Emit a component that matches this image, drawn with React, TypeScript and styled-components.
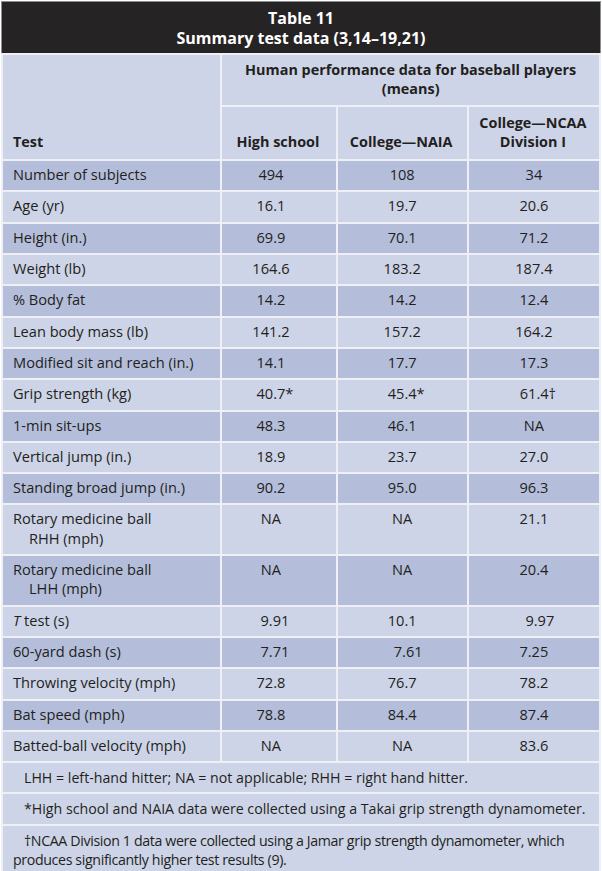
import styled, { createGlobalStyle } from "styled-components";

const GlobalStyle = createGlobalStyle`
  html, body {
    margin: 0;
    padding: 0;
    background: #ffffff;
  }
  body {
    font-family: "Open Sans", "Noto Sans", sans-serif;
    color: #231f20;
  }
`;

const LIGHT = "#cdd4e7";
const DARK = "#b4bedb";

const Page = styled.div`
  width: 600px;
  padding: 1px 0 0 1px;
`;

const TitleBar = styled.div`
  box-sizing: border-box;
  height: 52px;
  background: #262324;
  border: 1px solid #8e8e8e;
  border-bottom: 0;
  color: #ffffff;
  font-weight: 700;
  font-size: 16px;
  line-height: 20px;
  text-align: center;
  padding-top: 6px;
`;

const Table = styled.table`
  border-collapse: separate;
  border-spacing: 2px;
  table-layout: fixed;
  width: 600px;
  background: #eff0f5;
  font-size: 14.6px;
  line-height: 19.3px;
`;

const Col = styled.col<{ $w: number }>`
  width: ${(p) => p.$w}px;
`;

const HeadCell = styled.th<{ $align?: string }>`
  background: ${LIGHT};
  font-weight: 700;
  font-size: 14.4px;
  text-align: ${(p) => p.$align || "center"};
  vertical-align: bottom;
  padding: 6px 8px 8px 6px;
`;

const TestHead = styled(HeadCell)`
  padding-left: 10px;
`;

const SpanHead = styled(HeadCell)`
  vertical-align: middle;
  padding: 5px 6px 6px 6px;
  height: 38px;
`;

const LabelCell = styled.td<{ $dark: boolean }>`
  background: ${(p) => (p.$dark ? DARK : LIGHT)};
  padding: 4px 4px 6px 26px;
  text-indent: -16px;
  vertical-align: top;
`;

const ValueCell = styled.td<{ $dark: boolean; $first: boolean }>`
  background: ${(p) => (p.$dark ? DARK : LIGHT)};
  padding: 4px ${(p) => (p.$first ? 18 : 2)}px 6px 2px;
  text-align: center;
  vertical-align: top;
  white-space: nowrap;
`;

const Value = styled.span<{ $dx: number }>`
  position: relative;
  left: ${(p) => p.$dx}px;
`;

const Note = styled.td<{ $tight?: boolean }>`
  background: ${LIGHT};
  padding: 5px 4px 5px 10px;
  text-indent: 11px;
  font-size: 14.2px;
  line-height: 19.3px;
  letter-spacing: ${(p) => (p.$tight ? "-0.36px" : "0")};
`;

type Row = {
  label: React.ReactNode;
  values: [string, string, string];
  shifts?: [number, number, number];
};

const rows: Row[] = [
  { label: "Number of subjects", values: ["494", "108", "34"] },
  { label: "Age (yr)", values: ["16.1", "19.7", "20.6"] },
  { label: "Height (in.)", values: ["69.9", "70.1", "71.2"] },
  { label: "Weight (lb)", values: ["164.6", "183.2", "187.4"] },
  { label: "% Body fat", values: ["14.2", "14.2", "12.4"] },
  { label: "Lean body mass (lb)", values: ["141.2", "157.2", "164.2"] },
  { label: "Modified sit and reach (in.)", values: ["14.1", "17.7", "17.3"] },
  { label: "Grip strength (kg)", values: ["40.7*", "45.4*", "61.4†"], shifts: [4, 4, 4] },
  { label: "1-min sit-ups", values: ["48.3", "46.1", "NA"] },
  { label: "Vertical jump (in.)", values: ["18.9", "23.7", "27.0"] },
  { label: "Standing broad jump (in.)", values: ["90.2", "95.0", "96.3"] },
  {
    label: (
      <>
        Rotary medicine ball
        <br />
        RHH (mph)
      </>
    ),
    values: ["NA", "NA", "21.1"],
  },
  {
    label: (
      <>
        Rotary medicine ball
        <br />
        LHH (mph)
      </>
    ),
    values: ["NA", "NA", "20.4"],
  },
  {
    label: (
      <>
        <i>T</i> test (s)
      </>
    ),
    values: ["9.91", "10.1", "9.97"],
    shifts: [4, 0, 6],
  },
  { label: "60-yard dash (s)", values: ["7.71", "7.61", "7.25"], shifts: [4, 6, 0] },
  { label: "Throwing velocity (mph)", values: ["72.8", "76.7", "78.2"] },
  { label: "Bat speed (mph)", values: ["78.8", "84.4", "87.4"] },
  { label: "Batted-ball velocity (mph)", values: ["NA", "NA", "83.6"] },
];

const notes = [
  "LHH = left-hand hitter; NA = not applicable; RHH = right hand hitter.",
  "*High school and NAIA data were collected using a Takai grip strength dynamometer.",
  "†NCAA Division 1 data were collected using a Jamar grip strength dynamometer, which produces significantly higher test results (9).",
];

export default function App() {
  return (
    <>
      <GlobalStyle />
      <Page>
        <TitleBar>
          Table 11
          <br />
          Summary test data (3,14–19,21)
        </TitleBar>
        <Table>
          <colgroup>
            <Col $w={217} />
            <Col $w={113} />
            <Col $w={129} />
            <Col $w={130} />
          </colgroup>
          <thead>
            <tr>
              <TestHead rowSpan={2} $align="left">
                Test
              </TestHead>
              <SpanHead colSpan={3}>
                Human performance data for baseball players
                <br />
                (means)
              </SpanHead>
            </tr>
            <tr>
              <HeadCell>High school</HeadCell>
              <HeadCell>College—NAIA</HeadCell>
              <HeadCell>
                College—NCAA
                <br />
                Division I
              </HeadCell>
            </tr>
          </thead>
          <tbody>
            {rows.map((r, i) => (
              <tr key={i}>
                <LabelCell $dark={i % 2 === 0}>{r.label}</LabelCell>
                {r.values.map((v, j) => (
                  <ValueCell key={j} $dark={i % 2 === 0} $first={j === 0}>
                    <Value $dx={r.shifts ? r.shifts[j] : 0}>{v}</Value>
                  </ValueCell>
                ))}
              </tr>
            ))}
            {notes.map((n, i) => (
              <tr key={"n" + i}>
                <Note colSpan={4} $tight={i === 2}>
                  {n}
                </Note>
              </tr>
            ))}
          </tbody>
        </Table>
      </Page>
    </>
  );
}
